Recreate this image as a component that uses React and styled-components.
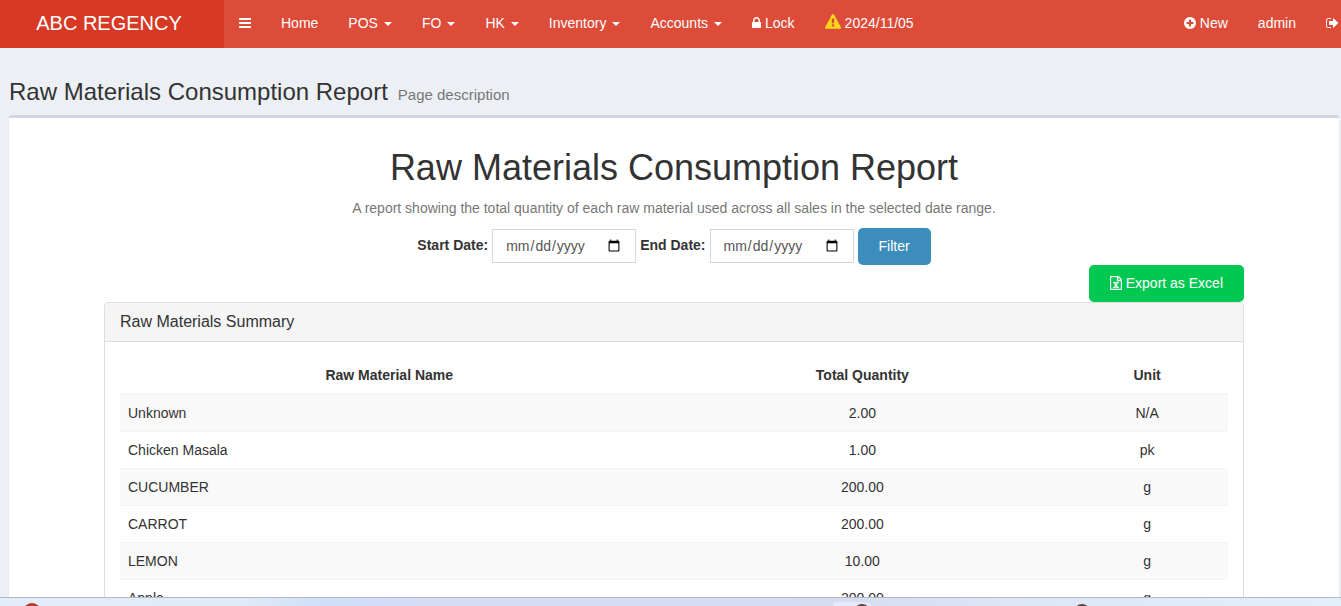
import React from "react";
import styled, { createGlobalStyle } from "styled-components";

const menuItems = [
	{ label: "Home" },
	{ label: "POS", caret: true },
	{ label: "FO", caret: true },
	{ label: "HK", caret: true },
	{ label: "Inventory", caret: true },
	{ label: "Accounts", caret: true },
];

const materials = [
	{ name: "Unknown", quantity: "2.00", unit: "N/A" },
	{ name: "Chicken Masala", quantity: "1.00", unit: "pk" },
	{ name: "CUCUMBER", quantity: "200.00", unit: "g" },
	{ name: "CARROT", quantity: "200.00", unit: "g" },
	{ name: "LEMON", quantity: "10.00", unit: "g" },
	{ name: "Apple", quantity: "200.00", unit: "g" },
];

const icons = {
	bars: {
		box: "128 0 1536 1792",
		width: 12,
		path: "M1664 1344v128q0 26-19 45t-45 19h-1408q-26 0-45-19t-19-45v-128q0-26 19-45t45-19h1408q26 0 45 19t19 45zm0-512v128q0 26-19 45t-45 19h-1408q-26 0-45-19t-19-45v-128q0-26 19-45t45-19h1408q26 0 45 19t19 45zm0-512v128q0 26-19 45t-45 19h-1408q-26 0-45-19t-19-45v-128q0-26 19-45t45-19h1408q26 0 45 19t19 45z",
	},
	lock: {
		box: "320 0 1152 1792",
		width: 9,
		path: "M640 768h512v-192q0-106-75-181t-181-75-181 75-75 181v192zm832 96v576q0 40-28 68t-68 28h-960q-40 0-68-28t-28-68v-576q0-40 28-68t68-28h32v-192q0-184 132-316t316-132 316 132 132 316v192h32q40 0 68 28t28 68z",
	},
	plus: {
		box: "128 0 1536 1792",
		width: 12,
		path: "M1344 960v-128q0-26-19-45t-45-19h-256v-256q0-26-19-45t-45-19h-128q-26 0-45 19t-19 45v256h-256q-26 0-45 19t-19 45v128q0 26 19 45t45 19h256v256q0 26 19 45t45 19h128q26 0 45-19t19-45v-256h256q26 0 45-19t19-45zm320-64q0 209-103 385.5t-279.5 279.5-385.5 103-385.5-103-279.5-279.5-103-385.5 103-385.5 279.5-279.5 385.5-103 385.5 103 279.5 279.5 103 385.5z",
	},
	signOut: {
		box: "64 0 1664 1792",
		width: 13,
		path: "M704 1440q0 4 1 20t.5 26.5-3 23.5-10 19.5-20.5 6.5h-320q-119 0-203.5-84.5t-84.5-203.5v-704q0-119 84.5-203.5t203.5-84.5h320q13 0 22.5 9.5t9.5 22.5q0 4 1 20t.5 26.5-3 23.5-10 19.5-20.5 6.5h-320q-66 0-113 47t-47 113v704q0 66 47 113t113 47h312l11.5 1 11.5 3 8 5.5 7 9 2 13.5zm928-544q0 26-19 45l-544 544q-19 19-45 19t-45-19-19-45v-288h-448q-26 0-45-19t-19-45v-384q0-26 19-45t45-19h448v-288q0-26 19-45t45-19 45 19l544 544q19 19 19 45z",
	},
	warning: {
		box: "0 0 1792 1792",
		width: 16,
		path: "M1024 1375v-190q0-14-9.5-23.5t-22.5-9.5h-192q-13 0-22.5 9.5t-9.5 23.5v190q0 14 9.5 23.5t22.5 9.5h192q13 0 22.5-9.5t9.5-23.5zm-2-374l18-459q0-12-10-19-13-11-24-11h-220q-11 0-24 11-10 7-10 21l17 457q0 10 10 16.5t24 6.5h185q14 0 23.5-6.5t10.5-16.5zm-14-934l768 1408q35 63-2 126-17 29-46.5 46t-63.5 17h-1536q-34 0-63.5-17t-46.5-46q-37-63-2-126l768-1408q17-31 47-49t65-18 65 18 47 49z",
	},
	excel: {
		box: "128 0 1536 1792",
		width: 12,
		stroke: 50,
		path: "M1596 380q28 28 48 76t20 88v1152q0 40-28 68t-68 28h-1344q-40 0-68-28t-28-68v-1600q0-40 28-68t68-28h896q40 0 88 20t76 48zm-444-244v376h376q-10-29-22-41l-313-313q-12-12-41-22zm384 1528v-1024h-416q-40 0-68-28t-28-68v-416h-768v1536h1280zm-979-234v106h281v-106h-75l103-161q5-7 10-16.5t7.5-13.5 3.5-4h2q1 4 5 10 2 4 4.5 7.5t6 8 6.5 8.5l107 161h-76v106h291v-106h-68l-192-273 195-282h67v-107h-279v107h74l-103 159q-4 7-10 16.5t-9 13.5l-2 3h-2q-1-4-5-10-6-11-17-23l-106-159h76v-107h-290v107h68l189 272-194 283h-68z",
	},
};

const Icon = ({ name }) => {
	const { box, width, path, stroke = 0 } = icons[name];
	return (
		<IconSvg viewBox={box} $width={width} aria-hidden="true">
			<path d={path} stroke="currentColor" strokeWidth={stroke} />
		</IconSvg>
	);
};

const App = () => {
	return (
		<Page>
			<GlobalStyle />
			<Navbar>
				<Brand href="#">ABC REGENCY</Brand>
				<Menu>
					<ToggleButton type="button" aria-label="Toggle navigation">
						<Icon name="bars" />
					</ToggleButton>
					{menuItems.map((item) => (
						<MenuLink href="#" key={item.label}>
							{item.label}
							{item.caret && <Caret />}
						</MenuLink>
					))}
					<MenuLink href="#">
						<Icon name="lock" />
						Lock
					</MenuLink>
					<MenuLink href="#">
						<Warning>
							<Icon name="warning" />
						</Warning>
						2024/11/05
					</MenuLink>
				</Menu>
				<UserMenu>
					<MenuLink href="#">
						<Icon name="plus" />
						New
					</MenuLink>
					<MenuLink href="#">admin</MenuLink>
					<MenuLink href="#" aria-label="Sign out">
						<Icon name="signOut" />
					</MenuLink>
				</UserMenu>
			</Navbar>
			<Content>
				<ContentHeader>
					<PageTitle>Raw Materials Consumption Report</PageTitle>
					<PageDescription>Page description</PageDescription>
				</ContentHeader>
				<Box>
					<Container>
						<ReportTitle>Raw Materials Consumption Report</ReportTitle>
						<ReportText>
							A report showing the total quantity of each raw material used across all sales in the selected date range.
						</ReportText>
						<FilterForm onSubmit={(e) => e.preventDefault()}>
							<Label htmlFor="start_date">Start Date:</Label>
							<DateInput type="date" id="start_date" />
							<Label htmlFor="end_date">End Date:</Label>
							<DateInput type="date" id="end_date" />
							<Button type="submit">Filter</Button>
						</FilterForm>
						<Actions>
							<Button type="button" $color="#00c851">
								<Icon name="excel" />
								Export as Excel
							</Button>
						</Actions>
						<Panel>
							<PanelHeading>Raw Materials Summary</PanelHeading>
							<PanelBody>
								<Table>
									<thead>
										<tr>
											<HeadCell $width="48.6%">Raw Material Name</HeadCell>
											<HeadCell $width="36.8%">Total Quantity</HeadCell>
											<HeadCell $width="14.6%">Unit</HeadCell>
										</tr>
									</thead>
									<tbody>
										{materials.map((material) => (
											<Row key={material.name}>
												<Cell>{material.name}</Cell>
												<Cell $center>{material.quantity}</Cell>
												<Cell $center>{material.unit}</Cell>
											</Row>
										))}
									</tbody>
								</Table>
							</PanelBody>
						</Panel>
					</Container>
				</Box>
			</Content>
			<Taskbar>
				<svg width="100%" height="8" aria-hidden="true">
					<circle cx="32" cy="14" r="9" fill="#c4302b" />
					<rect x="833" y="4" width="38" height="20" rx="4" fill="#e6e9f8" />
					<circle cx="862" cy="14" r="8" fill="#5d4440" />
					<circle cx="1082" cy="14" r="8" fill="#5d4440" />
				</svg>
			</Taskbar>
		</Page>
	);
};

const GlobalStyle = createGlobalStyle`
	* {
		box-sizing: border-box;
	}

	body {
		margin: 0;
		background-color: #ecf0f5;
		color: #333;
		font-family: "Liberation Sans", Arial, sans-serif;
		font-size: 14px;
		line-height: 20px;
	}
`;

const Page = styled.div`
	display: flex;
	flex-direction: column;
	height: 100vh;
	overflow: hidden;
`;

const Navbar = styled.header`
	display: flex;
	flex-shrink: 0;
	height: 48px;
	background-color: #dd4b39;
	color: #fff;
`;

const Brand = styled.a`
	width: 224px;
	padding-right: 6px;
	background-color: #d73925;
	color: #fff;
	font-size: 20px;
	line-height: 46px;
	text-align: center;
	text-decoration: none;
`;

const Menu = styled.nav`
	display: flex;
	flex: 1;
`;

const UserMenu = styled.nav`
	display: flex;
	padding-right: 2px;

	a:last-child {
		padding-right: 0;
	}
`;

const ToggleButton = styled.button`
	display: flex;
	align-items: center;
	padding: 0 15px 2px;
	border: none;
	background: none;
	color: #fff;
	cursor: pointer;
`;

const MenuLink = styled.a`
	display: flex;
	align-items: center;
	gap: 4px;
	padding: 0 15px 2px;
	color: #fff;
	text-decoration: none;
	white-space: nowrap;
`;

const Caret = styled.span`
	margin-top: 2px;
	margin-left: 2px;
	border-top: 4px solid;
	border-right: 4px solid transparent;
	border-left: 4px solid transparent;
`;

const IconSvg = styled.svg`
	flex-shrink: 0;
	width: ${({ $width }) => $width}px;
	height: ${({ $width }) => ($width > 14 ? $width : 14)}px;
	fill: currentColor;
`;

const Warning = styled.span`
	display: flex;
	padding-bottom: 2px;
	color: #f9d71c;
`;

const Content = styled.main`
	display: flex;
	flex: 1;
	flex-direction: column;
	min-height: 0;
	padding: 0 2px 0 9px;
	overflow: hidden;
`;

const ContentHeader = styled.section`
	display: flex;
	align-items: baseline;
	gap: 10px;
	padding: 31px 0 10px;
`;

const PageTitle = styled.h1`
	margin: 0;
	font-size: 24px;
	font-weight: 400;
	line-height: 26px;
`;

const PageDescription = styled.small`
	color: #777;
	font-size: 15px;
`;

const Box = styled.section`
	flex: 1 0 auto;
	border-top: 3px solid #d2d6de;
	border-radius: 3px 3px 0 0;
	background-color: #fff;
	box-shadow: 0 1px 1px rgba(0, 0, 0, 0.1);
`;

const Container = styled.div`
	max-width: 1170px;
	margin: 0 auto;
	padding: 30px 15px 0;
`;

const ReportTitle = styled.h2`
	margin: 0 0 10px;
	font-size: 36px;
	font-weight: 400;
	line-height: 40px;
	text-align: center;
`;

const ReportText = styled.p`
	margin: 0 0 10px;
	color: #777;
	text-align: center;
`;

const FilterForm = styled.form`
	display: flex;
	align-items: center;
	justify-content: center;
	gap: 4px;
`;

const Label = styled.label`
	padding-bottom: 4px;
	font-weight: 700;
`;

const DateInput = styled.input`
	width: 144px;
	height: 34px;
	margin: 0 0 2px;
	padding: 6px 12px;
	border: 1px solid #d2d6de;
	border-radius: 0;
	background-color: #fff;
	color: #555;
	font-family: inherit;
	font-size: 14px;
`;

const Button = styled.button`
	display: flex;
	align-items: center;
	gap: 4px;
	height: 37px;
	padding: 0 21px 2px;
	border: none;
	border-radius: 5px;
	background-color: ${({ $color }) => $color || "#3c8dbc"};
	color: #fff;
	font-family: inherit;
	font-size: 14px;
	cursor: pointer;
`;

const Actions = styled.div`
	display: flex;
	justify-content: flex-end;
`;

const Panel = styled.div`
	border: 1px solid #ddd;
	border-radius: 4px;
	background-color: #fff;
`;

const PanelHeading = styled.div`
	padding: 9px 15px;
	border-bottom: 1px solid #ddd;
	border-radius: 3px 3px 0 0;
	background-color: #f5f5f5;
	font-size: 16px;
`;

const PanelBody = styled.div`
	padding: 15px;
`;

const Table = styled.table`
	width: 100%;
	border-collapse: collapse;
`;

const HeadCell = styled.th`
	width: ${({ $width }) => $width};
	padding: 8px;
	border-bottom: 2px solid #f4f4f4;
	text-align: center;
`;

const Row = styled.tr`
	&:nth-child(odd) {
		background-color: #f9f9f9;
	}
`;

const Cell = styled.td`
	padding: 8px;
	border-top: 1px solid #f4f4f4;
	text-align: ${({ $center }) => ($center ? "center" : "left")};
`;

const Taskbar = styled.footer`
	display: flex;
	flex-shrink: 0;
	height: 9px;
	border-top: 1px solid #b3b8c8;
	background: linear-gradient(90deg, #e2edf7 0%, #dfebf7 18%, #cfdff9 24%, #d6dcf5 34%, #d5dcf2 62%, #dde8f7 78%, #e2eef9 100%);
`;

export default App;
